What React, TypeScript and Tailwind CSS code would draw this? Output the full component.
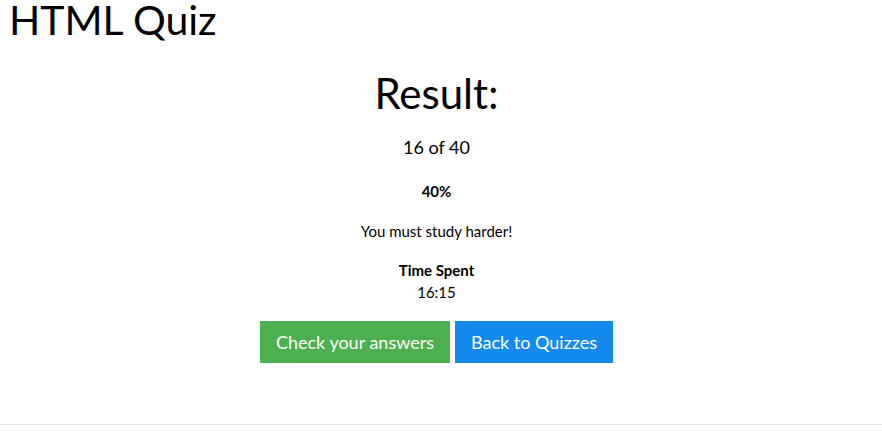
import * as React from "react";

export default function App() {
  return (
    <div
      className="min-h-[439px] bg-white text-black"
      style={{ fontFamily: 'Lato, "Open Sans", sans-serif' }}
    >
      <h1 className="pl-[9px] text-[41px] leading-[40px] font-normal">HTML Quiz</h1>

      <div className="flex flex-col items-center pr-[9px] text-[15px]">
        <h2 className="mt-[31px] text-[42px] leading-[44px] font-normal">Result:</h2>
        <p className="mt-[20px] text-[18px] leading-[24px]">16 of 40</p>
        <p className="mt-[21px] font-bold leading-[22px]">40%</p>
        <p className="mt-[18px] leading-[22px]">You must study harder!</p>
        <p className="mt-[17px] font-bold leading-[22px]">Time Spent</p>
        <p className="leading-[22px]">16:15</p>

        <div className="mt-[18px] flex gap-[5px]">
          <button className="bg-[#4caf50] px-4 py-2 text-[18px] leading-[26px] text-white">
            Check your answers
          </button>
          <button className="bg-[#158aee] px-4 py-2 text-[18px] leading-[26px] text-white">
            Back to Quizzes
          </button>
        </div>
      </div>

      <div className="mt-[61px] h-[15px] border-t border-[#e8e8e8]" />
    </div>
  );
}
